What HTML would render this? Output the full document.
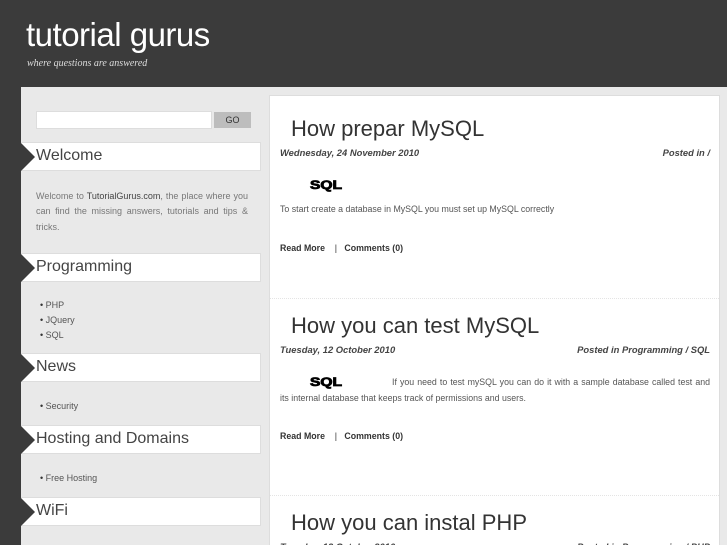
<!DOCTYPE html>
<html><head><style>
*{margin:0;padding:0;box-sizing:border-box}
html,body{width:727px;height:545px;overflow:hidden}
body{background:#3b3b3b;font-family:"Liberation Sans",sans-serif;position:relative}
.abs{position:absolute}
h1{position:absolute;left:26px;top:16px;font-size:33px;font-weight:normal;color:#fff;letter-spacing:-0.5px}
.tag{position:absolute;left:27px;top:58px;font-family:"Liberation Serif",serif;font-style:italic;font-size:10px;color:#ddd}
.panel{position:absolute;left:21px;top:87px;width:706px;height:458px;background:#e9e9e9}
.search{left:36px;top:111px;width:176px;height:18px;background:#fff;border:1px solid #ddd}
.go{left:214px;top:112px;width:37px;height:16px;background:#bdbdbd;font-size:9px;text-align:center;line-height:16px;color:#333}
.hd{position:absolute;left:21px;width:240px;height:29px;background:#fff;border:1px solid #ddd;border-left:none;font-size:16px;color:#444;padding-left:15px;line-height:26px}
.hd:before{content:"";position:absolute;left:0;top:0;width:14px;height:28px;background:#3b3b3b;clip-path:polygon(0 0,0 100%,100% 50%)}
.txt{position:absolute;left:36px;width:212px;font-size:9px;line-height:15.3px;color:#777;text-align:justify}
.txt b{color:#444;font-weight:normal}
ul{position:absolute;left:40px;font-size:9px;color:#555;list-style:none;line-height:15px}
ul li:before{content:"• ";color:#333}
.main{left:269px;top:95px;width:451px;height:460px;background:#fff;border:1px solid #ddd}
.sep{position:absolute;left:270px;width:449px;border-top:1px dotted #e4e4e4}
.t{position:absolute;left:291px;font-size:22px;color:#333}
.d{position:absolute;left:280px;width:430px;font-size:9.4px;font-weight:bold;font-style:italic;color:#444}
.d span{float:right}
.sql{position:absolute;font-size:12px;font-weight:900;color:#000;-webkit-text-stroke:0.8px #000;transform:scaleX(1.3);transform-origin:left}
.p{position:absolute;left:280px;width:430px;font-size:8.8px;color:#555;line-height:15.5px;text-align:justify}
.rm{position:absolute;left:280px;font-size:8.8px;font-weight:bold;color:#333}
</style></head><body>
<h1>tutorial gurus</h1>
<div class="tag">where questions are answered</div>
<div class="panel"></div>
<div class="abs search"></div><div class="abs go">GO</div>
<div class="hd" style="top:142px">Welcome</div>
<div class="txt" style="top:189px">Welcome to <b>TutorialGurus.com</b>, the place where you can find the missing answers, tutorials and tips &amp; tricks.</div>
<div class="hd" style="top:253px">Programming</div>
<ul style="top:298px"><li>PHP</li><li>JQuery</li><li>SQL</li></ul>
<div class="hd" style="top:353px">News</div>
<ul style="top:399px"><li>Security</li></ul>
<div class="hd" style="top:425px">Hosting and Domains</div>
<ul style="top:471px"><li>Free Hosting</li></ul>
<div class="hd" style="top:497px">WiFi</div>
<div class="abs main"></div>
<div class="t" style="top:116px">How prepar MySQL</div>
<div class="d" style="top:147px">Wednesday, 24 November 2010<span>Posted in /</span></div>
<div class="sql" style="left:310px;top:178px">SQL</div>
<div class="p" style="top:202px">To start create a database in MySQL you must set up MySQL correctly</div>
<div class="rm" style="top:243px">Read More &nbsp;&nbsp; <span style="font-weight:normal">|</span> &nbsp;&nbsp;Comments (0)</div>
<div class="sep" style="top:298px"></div>
<div class="t" style="top:313px">How you can test MySQL</div>
<div class="d" style="top:344px">Tuesday, 12 October 2010<span>Posted in Programming / SQL</span></div>
<div class="sql" style="left:310px;top:375px">SQL</div>
<div class="p" style="top:375px;text-indent:112px">If you need to test mySQL you can do it with a sample database called test and its internal database that keeps track of permissions and users.</div>
<div class="rm" style="top:431px">Read More &nbsp;&nbsp; <span style="font-weight:normal">|</span> &nbsp;&nbsp;Comments (0)</div>
<div class="sep" style="top:495px"></div>
<div class="t" style="top:510px">How you can instal PHP</div>
<div class="d" style="top:541px">Tuesday, 12 October 2010<span>Posted in Programming / PHP</span></div>
</body></html>
